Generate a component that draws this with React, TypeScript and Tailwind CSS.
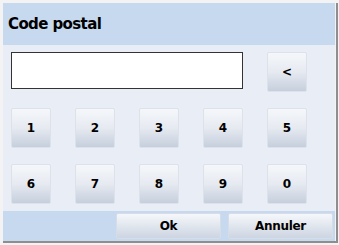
import { type FC } from "react";

const keys = ["1", "2", "3", "4", "5", "6", "7", "8", "9", "0"];

const KeyButton: FC<{ label: string }> = ({ label }) => (
  <button className="w-[40px] h-[40px] rounded-[2px] border border-[#dde2ea] bg-gradient-to-b from-[#f5f7fa] via-[#e6eaf1] to-[#c6cfdd] text-[12px] font-bold text-black flex items-center justify-center">
    {label}
  </button>
);

export default function App() {
  return (
    <div
      className="w-[339px] h-[245px] bg-[#f3f3f3] pt-[3px] pl-[3px]"
      style={{ fontFamily: '"DejaVu Sans", Verdana, sans-serif' }}
    >
      <div className="w-[335px] h-[240px] border-r-2 border-b-2 border-[#8e8e8e]">
        <div className="w-[332px] h-[238px] flex flex-col">
          <div className="h-[42px] bg-[#c6d9ef] flex items-center pl-[5px]">
            <span className="text-[15px] font-bold text-black tracking-[-0.6px]">Code postal</span>
          </div>

          <div className="flex-1 bg-[#e9eef6] pt-[7px] pl-[8px]">
            <div className="grid grid-cols-[repeat(5,40px)] gap-x-[24px] gap-y-[16px]">
              <input
                type="text"
                className="col-span-4 h-[37px] bg-white border border-[#333333] outline-none"
              />
              <KeyButton label="<" />
              {keys.map((k) => (
                <KeyButton key={k} label={k} />
              ))}
            </div>
          </div>

          <div className="h-[30px] bg-[#c6d9ef] flex items-center justify-end gap-[7px] pr-[2px]">
            <button className="w-[105px] h-[26px] rounded-[2px] border border-[#d6dde8] bg-gradient-to-b from-[#f5f7fa] to-[#cdd5e2] text-[12px] font-bold text-black tracking-[-0.3px]">
              Ok
            </button>
            <button className="w-[105px] h-[26px] rounded-[2px] border border-[#d6dde8] bg-gradient-to-b from-[#f5f7fa] to-[#cdd5e2] text-[12px] font-bold text-black tracking-[-0.3px]">
              Annuler
            </button>
          </div>
        </div>
      </div>
    </div>
  );
}
